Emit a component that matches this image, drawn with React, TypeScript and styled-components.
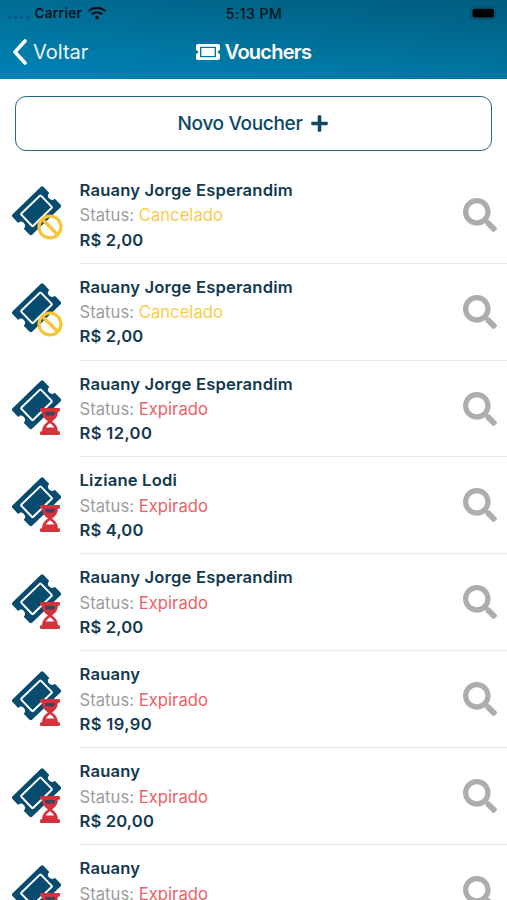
import React from 'react';
import styled, { createGlobalStyle } from 'styled-components';
import { FaTicketAlt, FaBan, FaSearch, FaPlus, FaWifi } from 'react-icons/fa';

const Global = createGlobalStyle`
  * { box-sizing: border-box; }
  html, body { margin: 0; background: #fff; overflow: hidden; }
  body { font-family: Inter, "Liberation Sans", sans-serif; color: #12394f; }
`;
const Screen = styled.div`
  width: 507px;
  height: 900px;
  overflow: hidden;
  background: #fff;
`;
const Header = styled.header`
  height: 79px;
  background: linear-gradient(5deg, #0082b9 0%, #00759f 42%, #005c7e 100%);
`;
const StatusBar = styled.div`
  display: grid;
  grid-template-columns: 1fr auto 1fr;
  align-items: center;
  height: 26px;
  padding: 0 7px 0 8px;
  color: #04141c;
  font-size: 13.5px;
  font-weight: 600;
`;
const Carrier = styled.div`
  display: flex;
  align-items: center;
  gap: 5.5px;
  letter-spacing: 0.3px;
`;
const Time = styled.span`
  font-weight: 500;
  font-size: 14px;
  letter-spacing: 0.5px;
`;
const Dots = styled.div`
  display: flex;
  gap: 3px;
  margin-top: 8px;
  i { width: 3px; height: 3px; border-radius: 50%; background: #005578; }
`;
const Battery = styled.svg`
  justify-self: end;
  display: block;
`;
const NavBar = styled.div`
  display: grid;
  grid-template-columns: 1fr auto 1fr;
  align-items: center;
  height: 52px;
  padding: 0 12px;
  color: #fff;
`;
const Back = styled.div`
  display: flex;
  align-items: center;
  gap: 6px;
  font-size: 20px;
  color: #eef7fb;
`;
const Title = styled.div`
  display: flex;
  align-items: center;
  gap: 5px;
  font-size: 20px;
  font-weight: 600;
  letter-spacing: -0.75px;
`;
const NewVoucher = styled.button`
  display: flex;
  align-items: center;
  justify-content: center;
  gap: 8px;
  width: 477px;
  height: 55px;
  margin: 17px 15px 15.8px;
  padding: 0;
  border: 1.5px solid #2b6681;
  border-radius: 11px;
  background: #fff;
  color: #0b4866;
  font: 500 19px Inter, sans-serif;
  letter-spacing: -0.33px;
`;
const Row = styled.div`
  display: flex;
  height: 96.9px;
  padding-left: 12px;
`;
const Badge = styled.div`
  position: relative;
  width: 49px;
  height: 50px;
  margin: 19.5px 18.5px 0 0;
  flex: none;
`;
const Ticket = styled.svg`
  display: block;
  width: 49px;
  height: 50px;
`;
const Cancelled = styled(FaBan)`
  position: absolute;
  left: 25px;
  top: 28px;
  width: 26px;
  height: 26px;
  color: #f8c534;
`;
const Hourglass = styled.svg`
  position: absolute;
  left: 28px;
  top: 28px;
  display: block;
`;
const Details = styled.div`
  flex: 1;
  display: flex;
  align-items: flex-start;
  justify-content: space-between;
  padding: 11px 10px 0 0;
  border-bottom: 1px solid #eaeaec;
`;
const Strong = styled.div<{ $spacing: number }>`
  height: 24.6px;
  font-size: 16.6px;
  line-height: 25px;
  font-weight: 600;
  letter-spacing: ${p => p.$spacing}px;
  white-space: nowrap;
`;
const Status = styled.div`
  height: 25.2px;
  font-size: 16.6px;
  line-height: 26px;
  letter-spacing: 0.04px;
  color: #9c9c9e;
`;
const Value = styled.span<{ $c: string }>`
  color: ${p => p.$c};
`;
const Search = styled(FaSearch)`
  width: 34px;
  height: 34px;
  margin-top: 20px;
  color: #adadad;
`;

const TicketIcon = () => (
  <Ticket viewBox="0 0 49 50">
    <g transform="translate(24.5 24.8) rotate(-44)">
      <path
        d="M-19.500 -14.200H19.500Q21.600 -14.200 21.600 -12.100V-4A4 4 0 0 0 21.600 4V12.100Q21.600 14.200 19.500 14.200H-19.500Q-21.600 14.200 -21.600 12.100V4A4 4 0 0 0 -21.600 -4V-12.100Q-21.600 -14.200 -19.500 -14.200Z"
        fill="#074c6e"
      />
      <rect x="-13.700" y="-8.500" width="27.400" height="17" rx="1" fill="none" stroke="#fff" strokeWidth="2" />
    </g>
  </Ticket>
);

const Expired = () => (
  <Hourglass width="20" height="27" viewBox="0 0 20 27">
    <path d="M2 2.500C2 8.500 4.500 11 8 13.500 4.500 16 2 18.500 2 24.500h16C18 18.500 15.500 16 12 13.500 15.500 11 18 8.500 18 2.500z" fill="#d5333b" />
    <path d="M5 3.700h10c0 1.500-.3 2.800-.9 3.800H5.900C5.300 6.500 5 5.200 5 3.700z" fill="#3f4560" />
    <path d="M5.900 19.500c.8-1.800 2.200-3.100 4.100-4.300 1.900 1.200 3.300 2.500 4.100 4.300z" fill="#fff" />
    <rect width="20" height="3.700" rx="1.200" fill="#d5333b" />
    <rect y="23.300" width="20" height="3.700" rx="1.200" fill="#d5333b" />
  </Hourglass>
);

const vouchers = [
  { name: 'Rauany Jorge Esperandim', status: 'Cancelado', price: '2,00' },
  { name: 'Rauany Jorge Esperandim', status: 'Cancelado', price: '2,00' },
  { name: 'Rauany Jorge Esperandim', status: 'Expirado', price: '12,00' },
  { name: 'Liziane Lodi', status: 'Expirado', price: '4,00' },
  { name: 'Rauany Jorge Esperandim', status: 'Expirado', price: '2,00' },
  { name: 'Rauany', status: 'Expirado', price: '19,90' },
  { name: 'Rauany', status: 'Expirado', price: '20,00' },
  { name: 'Rauany', status: 'Expirado', price: '20,00' },
];

export default function App() {
  return (
    <Screen>
      <Global />
      <Header>
        <StatusBar>
          <Carrier>
            <Dots><i /><i /><i /><i /></Dots>
            <span>Carrier</span>
            <FaWifi size={18} />
          </Carrier>
          <Time>5:13 PM</Time>
          <Battery width="30" height="14" viewBox="0 0 30 14">
            <rect x=".5" y=".8" width="25" height="12.4" rx="3.5" fill="none" stroke="#004a66" />
            <rect x="2.5" y="2.7" width="21.5" height="8.8" rx="2" fill="#000" />
            <path d="M27 5q2 2 0 4z" fill="#004a66" />
          </Battery>
        </StatusBar>
        <NavBar>
          <Back>
            <svg width="15" height="26" viewBox="0 0 15 26">
              <path d="M13 2 3 13l10 11" fill="none" stroke="#fff" strokeWidth="3.6" strokeLinecap="round" strokeLinejoin="round" />
            </svg>
            <span>Voltar</span>
          </Back>
          <Title><FaTicketAlt size={24} /><span>Vouchers</span></Title>
        </NavBar>
      </Header>
      <NewVoucher><span>Novo Voucher</span><FaPlus size={19} /></NewVoucher>
      {vouchers.map((v, i) => {
        const cancelled = v.status === 'Cancelado';
        return (
          <Row key={i}>
            <Badge>
              <TicketIcon />
              {cancelled ? <Cancelled /> : <Expired />}
            </Badge>
            <Details>
              <div>
                <Strong $spacing={0.18}>{v.name}</Strong>
                <Status>Status: <Value $c={cancelled ? '#fbcb4c' : '#ee5f66'}>{v.status}</Value></Status>
                <Strong $spacing={v.price.startsWith('1') ? 0.35 : 0.15}>R$ {v.price}</Strong>
              </div>
              <Search />
            </Details>
          </Row>
        );
      })}
    </Screen>
  );
}
